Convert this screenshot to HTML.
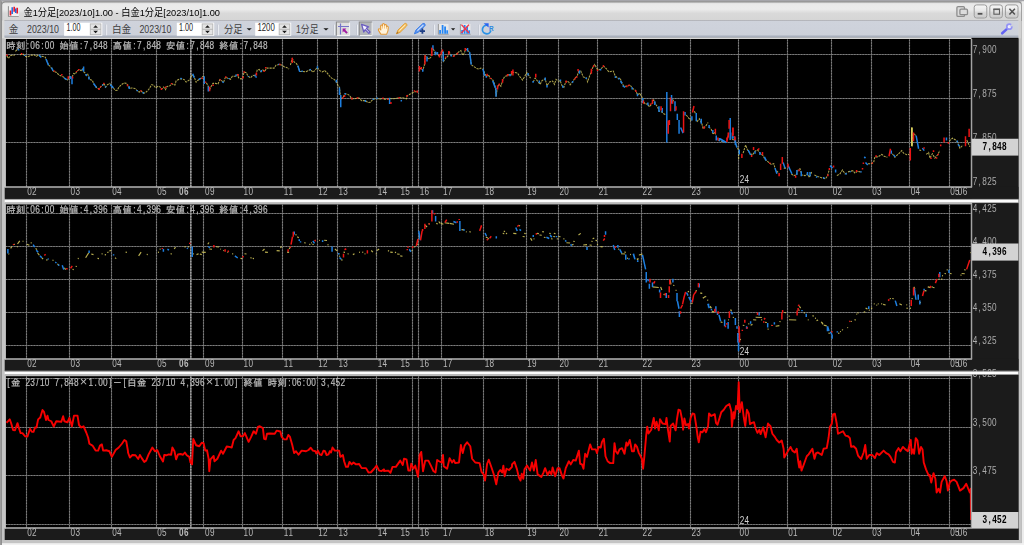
<!DOCTYPE html>
<html lang="ja">
<head>
<meta charset="utf-8">
<title>金1分足[2023/10]1.00 - 白金1分足[2023/10]1.00</title>
<style>
html,body{margin:0;padding:0;background:#c6c6c6;}
body{width:1024px;height:545px;overflow:hidden;font-family:"Liberation Sans","Noto Sans CJK JP",sans-serif;}
svg text{white-space:pre;}
</style>
</head>
<body>
<svg width="1024" height="545" viewBox="0 0 1024 545" style="display:block" font-family='"Liberation Sans", "IPAGothic", sans-serif'>
<defs><linearGradient id="gt" gradientUnits="userSpaceOnUse" x1="0" y1="2.6" x2="0" y2="20"><stop offset="0" stop-color="#e0e0e0"/><stop offset="0.12" stop-color="#eaeaea"/><stop offset="0.38" stop-color="#ebebeb"/><stop offset="0.5" stop-color="#e2e2e2"/><stop offset="0.62" stop-color="#d9d9d9"/><stop offset="1" stop-color="#d6d6d6"/></linearGradient><linearGradient id="gb" x1="0" y1="0" x2="0" y2="1"><stop offset="0" stop-color="#f6f6f6"/><stop offset="0.45" stop-color="#e8e8e8"/><stop offset="0.55" stop-color="#d8d8d8"/><stop offset="1" stop-color="#cacaca"/></linearGradient><linearGradient id="gtb" gradientUnits="userSpaceOnUse" x1="0" y1="20" x2="0" y2="37.7"><stop offset="0" stop-color="#b2b3b8"/><stop offset="0.05" stop-color="#b6b8be"/><stop offset="0.06" stop-color="#cfd3dc"/><stop offset="0.85" stop-color="#cdd1da"/><stop offset="0.9" stop-color="#aab1be"/><stop offset="1" stop-color="#a8afbd"/></linearGradient></defs>
<rect x="0" y="0" width="1024" height="545" fill="#c4c4c4"/>
<rect x="0" y="0" width="1024" height="1.3" fill="#a5a5aa"/>
<rect x="0" y="0" width="1.05" height="545" fill="#9c9c9c"/>
<rect x="1.05" y="1.3" width="0.9" height="543.7" fill="#8a8a8a"/>
<rect x="1021.7" y="1.3" width="2.3" height="543.7" fill="#ececec"/>
<rect x="1021.2" y="3" width="0.6" height="540" fill="#b2b2b2"/>
<rect x="1.95" y="543.2" width="1022.05" height="1.8" fill="#f2f2f2"/>
<path d="M1.6 21V5Q1.6 1.2 5.2 1.2H1018.4Q1021.6 1.2 1021.6 5V21Z" fill="#8d8d8d"/>
<path d="M2.2 38V5.4Q2.2 2.6 5.4 2.6H1018.2Q1021 2.6 1021 5.4V38Z" fill="url(#gt)"/>
<rect x="2.2" y="20.4" width="2.4" height="18" fill="#dadada"/>
<rect x="1018.4" y="20.4" width="2.6" height="18" fill="#d2d2d2"/>
<rect x="4.4" y="20" width="1014" height="17.7" fill="url(#gtb)"/>
<path d="M8.4 6.2V16.5H18.7" stroke="#8a8a8a" stroke-width="1" fill="none"/>
<rect x="9" y="6.2" width="9.8" height="10" fill="#f1f1f1"/>
<path d="M10.5 10.6V15.4M14.2 6.8V11.8M17.2 7.7V13.6" stroke="#f01828" stroke-width="1.7" fill="none"/>
<path d="M12.2 7.3V14M15.7 8.4V12.9" stroke="#2068e0" stroke-width="1.5" fill="none"/>
<filter id="nf0" x="0" y="0" width="1024" height="40" filterUnits="userSpaceOnUse"><feOffset dx="0" dy="0"/></filter>
<g filter="url(#nf0)"><text x="23.4" y="15.6" font-family='"Liberation Sans", "Noto Sans CJK JP", sans-serif' font-size="9.7" fill="#000" textLength="196.6" lengthAdjust="spacingAndGlyphs">金1分足[2023/10]1.00 - 白金1分足[2023/10]1.00</text></g>
<g stroke="#8c8c8c" stroke-width="1.3" fill="#dcdcdc"><rect x="956.9" y="6.6" width="7.6" height="9.8" rx="1.2"/><rect x="959.9" y="9.2" width="7.6" height="5.4" rx="1.2"/></g>
<rect x="973.8" y="4.2" width="13.4" height="14.6" rx="3" fill="#ededed" opacity="0.7"/>
<rect x="974.2" y="4.9" width="12.6" height="13.2" rx="2.4" fill="url(#gb)" stroke="#9a9a9a" stroke-width="1"/>
<rect x="989.4" y="4.2" width="13.4" height="14.6" rx="3" fill="#ededed" opacity="0.7"/>
<rect x="989.8" y="4.9" width="12.6" height="13.2" rx="2.4" fill="url(#gb)" stroke="#9a9a9a" stroke-width="1"/>
<rect x="1005" y="4.2" width="13.4" height="14.6" rx="3" fill="#ededed" opacity="0.7"/>
<rect x="1005.4" y="4.9" width="12.6" height="13.2" rx="2.4" fill="url(#gb)" stroke="#9a9a9a" stroke-width="1"/>
<rect x="977.7" y="12.9" width="4.7" height="1.8" fill="#505050"/>
<rect x="993.9" y="9.4" width="5.6" height="4.8" fill="none" stroke="#5e5e5e" stroke-width="1.1"/><rect x="993.35" y="8.5" width="6.7" height="1.6" fill="#5e5e5e"/>
<path d="M1009.4 8.7L1014.9 14.5M1014.9 8.7L1009.4 14.5" stroke="#505050" stroke-width="1.5" fill="none"/>
<path d="M1002.2 33.3L1007.6 28.4" stroke="#6262f2" stroke-width="2.5" stroke-linecap="round" fill="none"/>
<circle cx="1009.3" cy="26.7" r="2.5" fill="#eef" stroke="#9494f6" stroke-width="1.7"/>
<path d="M1009.3 26.7L1013.2 22.4L1014 26Z" fill="#cdd1da"/>
<text x="8.8" y="33.2" font-family='"Liberation Sans", "Noto Sans CJK JP", sans-serif' font-size="10" fill="#3e3e3e" textLength="9.6" lengthAdjust="spacingAndGlyphs">金</text>
<text x="27" y="32.8" font-family='"Liberation Sans", "Noto Sans CJK JP", sans-serif' font-size="10.4" fill="#3e3e3e" textLength="32" lengthAdjust="spacingAndGlyphs">2023/10</text>
<rect x="64.1" y="22.7" width="38.2" height="13.1" fill="#fff"/>
<rect x="90.3" y="23.9" width="10.6" height="10.8" fill="#e4e4e4" stroke="#b4b4b4" stroke-width="0.9"/>
<path d="M90.3 29.3H100.9" stroke="#b0b0b0" stroke-width="0.9"/>
<path d="M93.2 27.7L95.6 25.3L98 27.7ZM93.2 30.8L95.6 33.2L98 30.8Z" fill="#1c1c1c"/>
<text x="66.4" y="31.3" font-family='"Liberation Sans", "Noto Sans CJK JP", sans-serif' font-size="10.2" fill="#262626" textLength="14" lengthAdjust="spacingAndGlyphs">1.00</text>
<rect x="106.1" y="24.6" width="1" height="10.6" fill="#eef0f4"/>
<rect x="105.3" y="24.6" width="0.8" height="10.6" fill="#c2c6d1"/>
<text x="112" y="33.2" font-family='"Liberation Sans", "Noto Sans CJK JP", sans-serif' font-size="10" fill="#3e3e3e" textLength="19.2" lengthAdjust="spacingAndGlyphs">白金</text>
<text x="139.4" y="32.8" font-family='"Liberation Sans", "Noto Sans CJK JP", sans-serif' font-size="10.4" fill="#3e3e3e" textLength="32" lengthAdjust="spacingAndGlyphs">2023/10</text>
<rect x="176.8" y="22.7" width="37.4" height="13.1" fill="#fff"/>
<rect x="202.2" y="23.9" width="10.6" height="10.8" fill="#e4e4e4" stroke="#b4b4b4" stroke-width="0.9"/>
<path d="M202.2 29.3H212.8" stroke="#b0b0b0" stroke-width="0.9"/>
<path d="M205.1 27.7L207.5 25.3L209.9 27.7ZM205.1 30.8L207.5 33.2L209.9 30.8Z" fill="#1c1c1c"/>
<text x="179" y="31.3" font-family='"Liberation Sans", "Noto Sans CJK JP", sans-serif' font-size="10.2" fill="#262626" textLength="14" lengthAdjust="spacingAndGlyphs">1.00</text>
<rect x="217.9" y="24.6" width="1" height="10.6" fill="#eef0f4"/>
<rect x="217.1" y="24.6" width="0.8" height="10.6" fill="#c2c6d1"/>
<text x="224" y="33.2" font-family='"Liberation Sans", "Noto Sans CJK JP", sans-serif' font-size="10" fill="#3e3e3e" textLength="18.6" lengthAdjust="spacingAndGlyphs">分足</text>
<path d="M246.6 28.2H251.8L249.2 30.6Z" fill="#1a1a1a"/>
<rect x="255.2" y="22.7" width="36" height="13.1" fill="#fff"/>
<rect x="279.2" y="23.9" width="10.6" height="10.8" fill="#e4e4e4" stroke="#b4b4b4" stroke-width="0.9"/>
<path d="M279.2 29.3H289.8" stroke="#b0b0b0" stroke-width="0.9"/>
<path d="M282.1 27.7L284.5 25.3L286.9 27.7ZM282.1 30.8L284.5 33.2L286.9 30.8Z" fill="#1c1c1c"/>
<text x="257.4" y="31.3" font-family='"Liberation Sans", "Noto Sans CJK JP", sans-serif' font-size="10.2" fill="#262626" textLength="17.4" lengthAdjust="spacingAndGlyphs">1200</text>
<text x="296" y="33.2" font-family='"Liberation Sans", "Noto Sans CJK JP", sans-serif' font-size="10" fill="#3e3e3e" textLength="22.4" lengthAdjust="spacingAndGlyphs">1分足</text>
<path d="M323.4 28.2H328.6L326 30.6Z" fill="#1a1a1a"/>
<rect x="333.9" y="24.6" width="1" height="10.6" fill="#eef0f4"/>
<rect x="333.1" y="24.6" width="0.8" height="10.6" fill="#c2c6d1"/>
<rect x="336.4" y="22" width="13.2" height="13.5" fill="#dfdfdf"/>
<path d="M336.4 35.5V22H349.6" stroke="#8d8d8d" stroke-width="1.1" fill="none"/><path d="M349.6 22.6V35.5H337" stroke="#f4f4f4" stroke-width="1" fill="none"/>
<path d="M340.5 23.4V34.4M338 26.5H349" stroke="#7474c8" stroke-width="1.2" fill="none"/>
<path d="M342.6 28.6H346.4L345.2 29.8L347.8 32.4L346.4 33.8L343.8 31.2L342.6 32.4Z" fill="#a21ca2"/>
<rect x="357" y="24.6" width="1" height="10.6" fill="#eef0f4"/>
<rect x="356.2" y="24.6" width="0.8" height="10.6" fill="#c2c6d1"/>
<rect x="359.3" y="22" width="12.8" height="13.5" fill="#b3b6ba"/>
<path d="M359.3 35.5V22H372.1" stroke="#8d8d8d" stroke-width="1.1" fill="none"/><path d="M372.1 22.6V35.5H359.9" stroke="#eeeeee" stroke-width="1" fill="none"/>
<path d="M361.6 24.4L368.6 26.8L366.4 28.4L370 32L368.8 33.4L365.2 29.6L363.8 32Z" fill="#f4f2ff" stroke="#6a5cc0" stroke-width="1.3" stroke-linejoin="round"/>
<path d="M381 34.3Q379.6 32.6 378.6 30.6Q378 29.2 379 28.8Q380 28.6 380.8 30L380.6 26.2Q380.6 25 381.5 25Q382.3 25 382.4 26.2L382.5 24.6Q382.6 23.5 383.5 23.5Q384.4 23.5 384.5 24.6L384.6 25.4Q384.8 24.4 385.7 24.5Q386.5 24.6 386.5 25.8L386.6 26.8Q387 26 387.7 26.2Q388.3 26.4 388.3 27.6Q388.4 31.6 386.6 34.3Z" fill="#fff3dc" stroke="#e39a3a" stroke-width="1.1" stroke-linejoin="round"/>
<path d="M382.5 26.4V28.6M384.5 26V28.6M386.5 27V28.8" stroke="#efb860" stroke-width="0.7" fill="none"/>
<path d="M396.4 33.8L398 30L404.6 23.6Q406 22.8 406.8 24.2Q407.4 25.2 406.4 26.2L400 32.4Z" fill="#f6c468" stroke="#e0a03c" stroke-width="1" stroke-linejoin="round"/>
<path d="M399.4 30.6L405.2 25" stroke="#fdebc4" stroke-width="1" fill="none"/><path d="M396.3 33.9L397.4 31.6L398.6 33Z" fill="#a8702c"/>
<path d="M414.4 33.8L416 30L422.8 23.6Q424.2 22.8 425 24.2Q425.6 25.2 424.6 26.2L418 32.4Z" fill="#5b95f2" stroke="#3f7fe6" stroke-width="1" stroke-linejoin="round"/>
<path d="M417.4 30.6L423.4 25" stroke="#cfe0fc" stroke-width="1.1" fill="none"/>
<path d="M422.4 28.4V33.8M419.8 31.1H425" stroke="#1f3f86" stroke-width="1.8" fill="none"/>
<rect x="433.9" y="24.6" width="1" height="10.6" fill="#eef0f4"/>
<rect x="433.1" y="24.6" width="0.8" height="10.6" fill="#c2c6d1"/>
<rect x="438.1" y="24" width="10.4" height="10" fill="#e9e9e9"/>
<path d="M438.4 24V34.2H448.7" stroke="#9a9a9a" stroke-width="1" fill="none"/>
<path d="M440.1 33.7V30M442.6 33.7V25M445.1 33.7V26.5M447.2 33.7V30.2" stroke="#2686f4" stroke-width="1.8" fill="none"/>
<path d="M451 28.2H455.2L453.1 30.6Z" fill="#1a1a1a"/>
<rect x="460.1" y="24" width="10.4" height="10" fill="#e9e9e9"/>
<path d="M460.4 24V34.2H470.7" stroke="#9a9a9a" stroke-width="1" fill="none"/>
<path d="M462.1 33.7V30M464.6 33.7V25M467.1 33.7V26.5M469.2 33.7V30.2" stroke="#2686f4" stroke-width="1.8" fill="none"/>
<path d="M461.4 24.6L469 33M469 24.6L461.4 33" stroke="#f2364a" stroke-width="1.4" fill="none"/>
<rect x="479.1" y="24.6" width="1" height="10.6" fill="#eef0f4"/>
<rect x="478.3" y="24.6" width="0.8" height="10.6" fill="#c2c6d1"/>
<path d="M487.6 25.3A4.3 4.3 0 1 0 490.9 30.6" stroke="#2a92e6" stroke-width="1.7" fill="none"/>
<path d="M483.6 23.2H488.6V27.6Z" fill="#2a62f2"/>
<text x="489" y="30.9" font-family='"Liberation Sans", "Noto Sans CJK JP", sans-serif' font-size="8" font-weight="bold" fill="#2a86e0" textLength="4.6" lengthAdjust="spacingAndGlyphs">R</text>
<filter id="nf" x="0" y="0" width="1024" height="545" filterUnits="userSpaceOnUse"><feOffset dx="0" dy="0"/></filter>
<g id="charts" filter="url(#nf)">
<rect x="5" y="37.8" width="1013.4" height="502.2" fill="#000"/>
<defs>
<clipPath id="cp0"><rect x="5.8" y="39" width="965.5" height="147.3"/></clipPath>
<clipPath id="cp1"><rect x="5.8" y="204.2" width="965.5" height="154.1"/></clipPath>
<clipPath id="cp2"><rect x="5.8" y="376.1" width="965.5" height="151.3"/></clipPath>
</defs>
<g>
<rect x="971.5" y="38.5" width="46.9" height="160.3" fill="#1b1b1b"/>
<rect x="4.7" y="186.9" width="1013.7" height="11.9" fill="#1b1b1b"/>
<g>
<path d="M5.7 54.5H971M5.7 98.5H971M5.7 142.5H971M26.5 39.5V186.9M69.5 39.5V186.9M111.5 39.5V186.9M156.5 39.5V186.9M203.5 39.5V186.9M242.5 39.5V186.9M282.5 39.5V186.9M317.5 39.5V186.9M337.5 39.5V186.9M376.5 39.5V186.9M412.5 39.5V186.9M418.5 39.5V186.9M441.5 39.5V186.9M483.5 39.5V186.9M526.5 39.5V186.9M558.5 39.5V186.9M597.5 39.5V186.9M641.5 39.5V186.9M690.5 39.5V186.9M738.5 39.5V186.9M787.5 39.5V186.9M831.5 39.5V186.9M871.5 39.5V186.9M909.5 39.5V186.9M949.5 39.5V186.9" stroke="#525252" stroke-width="1.1" fill="none"/>
<path d="M5.7 54.5H971M5.7 98.5H971M5.7 142.5H971M26.5 39.5V186.9M69.5 39.5V186.9M111.5 39.5V186.9M156.5 39.5V186.9M203.5 39.5V186.9M242.5 39.5V186.9M282.5 39.5V186.9M317.5 39.5V186.9M337.5 39.5V186.9M376.5 39.5V186.9M412.5 39.5V186.9M418.5 39.5V186.9M441.5 39.5V186.9M483.5 39.5V186.9M526.5 39.5V186.9M558.5 39.5V186.9M597.5 39.5V186.9M641.5 39.5V186.9M690.5 39.5V186.9M738.5 39.5V186.9M787.5 39.5V186.9M831.5 39.5V186.9M871.5 39.5V186.9M909.5 39.5V186.9M949.5 39.5V186.9" stroke="#7e7e7e" stroke-width="1.1" stroke-dasharray="1.4 1.4" fill="none"/>
<path d="M190.8 39.5V186.9" stroke="#707070" stroke-width="1.4" fill="none"/>
<path d="M190.8 39.5V186.9" stroke="#a8a8a8" stroke-width="1.3" stroke-dasharray="1.6 1.2" fill="none"/>
</g>
<g fill="#bcbcbc" text-anchor="middle"><text x="10.84 20.54" y="49.1" font-size="9.3" stroke="#bcbcbc" stroke-width="0.25">時刻</text><text transform="translate(0 48.6) scale(0.82 1)" x="33.91 39.81 45.72 51.63 57.54 63.45 69.36" y="0" font-size="10.1" stroke="#bcbcbc" stroke-width="0.2">:06:00 </text><text x="64.14 73.83" y="49.1" font-size="9.3" stroke="#bcbcbc" stroke-width="0.25">始値</text><text transform="translate(0 48.6) scale(0.82 1)" x="98.9 104.81 110.72 116.62 122.53 128.44 134.35" y="0" font-size="10.1" stroke="#bcbcbc" stroke-width="0.2">:7,848 </text><text x="117.43 127.12" y="49.1" font-size="9.3" stroke="#bcbcbc" stroke-width="0.25">高値</text><text transform="translate(0 48.6) scale(0.82 1)" x="163.89 169.8 175.71 181.62 187.53 193.44 199.34" y="0" font-size="10.1" stroke="#bcbcbc" stroke-width="0.2">:7,848 </text><text x="170.73 180.42" y="49.1" font-size="9.3" stroke="#bcbcbc" stroke-width="0.25">安値</text><text transform="translate(0 48.6) scale(0.82 1)" x="228.89 234.8 240.7 246.61 252.52 258.43 264.34" y="0" font-size="10.1" stroke="#bcbcbc" stroke-width="0.2">:7,848 </text><text x="224.02 233.71" y="49.1" font-size="9.3" stroke="#bcbcbc" stroke-width="0.25">終値</text><text transform="translate(0 48.6) scale(0.82 1)" x="293.88 299.79 305.7 311.61 317.52 323.42" y="0" font-size="10.1" stroke="#bcbcbc" stroke-width="0.2">:7,848</text></g>
<g clip-path="url(#cp0)">
<path d="M911.9 127.6V146.2" stroke="#e6da62" stroke-width="1.7" fill="none"/>
<path d="M6.88 55.88L8.5 58.38L10.62 55.5L15 55M15.25 51.25L18.75 49.25M20 54.62L23.12 54L25 56.25L27.5 57.12L30.62 55.25L34.38 55L36.25 56.5L38.12 55L40 56.25L43.12 56.5L45.25 57.12L46.5 60.25L48.5 65L50.25 66.25L51.88 69L53.5 71.25L56.88 72.5L58.75 75L61.25 75.88L63.75 77.12L65 78.75L67.5 80L69.38 77.12L71.5 76.5L72.25 76.5L73.75 73.38L75.25 74L76.88 71.25L79 69.62L81 70.5L82.5 69L84 72.12L85.25 73L86.5 75.5L87.75 74.25L89.38 79.25L92.25 80.25L94 84.25L96.5 87.5L99 89L101 86.5L102.75 85L104 83.38L105.62 87.12L107.5 84.62L109.75 83.38L111.25 85.5L113.5 88L115.25 90.5L117.25 90.25L119 87.12L121.5 84.62L124 83L126.5 83.38L128 85.5M128 86.5L129.88 88.38L131.75 88L134.88 88.38L137.38 90.88L139.25 92.12L141.12 90.88L143.62 93.38L145.5 92.5L148.62 89.62L151.75 84.62L153.62 85.25L155.5 87.75L158 86.25L160.25 87.12L161.75 89L163.62 87.12L165.5 89.62L167 86.5L169.88 85.88L171.75 83.75L174.88 85L176.12 80.88L179.25 79.25L181.75 78.75L184.25 79.62L186.12 82.12L188 80.88L189.88 79.62L191.12 76.5L192.75 74.62L194.25 77.12L196.12 82.12L198 80.25L199.88 79L201.75 77.75L203.25 76.25L204.5 82.12L206.75 83.38L208.62 87.12L209.88 89L211.12 86.5L213 83.38L215.5 83.38L218 84L219.88 79.62L221.75 80.88L223.62 82.12L225.5 77.12L228 78.38L230.5 79.25L232.38 76.25L235.5 76.25L237.38 74.62L238.62 77.75L241.12 79L243 77.12L244 72.12L246.12 72.5L248 76.25L250.5 77.75L253 75.25L256 75.88M256 75L257.25 70L259.12 69.38L261 71.88L262.88 70L264.75 71.25L266.62 68.12L274.12 68.12L276 65.25L279.12 64.38L281.62 65L284.12 66.88L286.62 67.5L289.12 69M290.38 65L292.25 58.75L294.12 61.88L296.62 63.75L298.5 67.5L299.75 71.5L302.88 71.5L305.38 71.88L308.5 70.62L310.38 69.38L312.88 72.25L314.75 70.62L317.25 67.5L319.75 70.62L322.25 71.88L324.75 70.62L327.25 73.12L329.75 76.25L331.62 78.12L334.12 79.38L336 81.25L337.88 85L339.5 87.5L340.38 95L341 98.75L342.88 97.5L345 93.75L347.88 94.38L349.75 95.62L351.62 98.75L354.75 98.75L357.25 98.12L359.12 98.12L361.62 100.62L365.38 100.62L367.88 102.5L370.38 102.25L372.88 99.38L376 98.5L379.12 99L384 98.75M384 99.25L387.75 99L389.62 98.38L392.75 98.75L396.5 98.38L399 97.75L402.75 97.75L406.5 98.75L407.12 95.88L410.25 94L414 92.12L417.12 91.5M419 69L420.88 68.38L422.75 70.25L424.25 65.88L425.25 55.88L427.12 57.75L429 59L430.88 57.12L432.12 48.38L433.38 49L435.25 54L437.12 52.75L439 56.5L440.88 53.38L442.5 50.88L443.75 61.25L445.88 57.75L447.75 56.5L449 51.5L450.88 55.25L453.38 56.25L455.88 54.62L458.38 52.12L460.88 50.5L462.75 55.25L464.62 52.75L465.25 49L467.12 50L469 51.5L470.25 56.5L471.25 64.62L473.38 66.25L476.5 68.38L479 69L480.88 68L483.38 69.62L484.62 73.38L486.5 76.5L488.38 74.62L490.25 78.38L492.12 79L494 82.12L495.25 87.12L496.25 96.5L497.12 89L499 84.62L500.88 86.25L502.75 80.25L504.62 76.5L507.12 75.88L509 74.62L510.88 75.25L512 72.12M512 72.5L514.5 72.25L517.62 73.12L519.5 76.25L522.62 80L524.5 76.88L526.75 72.5L528.88 75.62L530.5 78.12M533.25 81.88L535.12 78.12L537.62 81.25L540.12 84.38L542 80.62L545.12 78.75L547 85.62L549.5 81.88L552.62 81L554.5 84.38L556 79.38L558.5 81.25L560.12 80.62L562 85.62L563.88 87.25L565.75 81.88L568.25 81.25L570.12 84.75L572.62 81.88L574.5 78.75L577 76.25L578.88 71.25L580.75 71L583.25 76.88L586.38 78.12L587.62 81.88L589.5 76.25L591.38 71.25L593.25 66.25L594.75 64.38L597.62 70L600.75 69.38L603.25 66L605.75 68.12L608.88 71.88L613.25 71L615.12 75.62L618.25 78.75L620.12 78.12L622 83.12L623.88 86.25L627 86.25L630.12 85L632.62 88.5L635.12 90L637.62 94.75L640 93.12M640 93.75L641.88 96.88L643.12 101.25L645.62 104.38L647.5 103.75L649.38 106.88L651.88 103.75L653.75 100L655.62 104.38L657.5 106.88L659.38 111.25L661.88 111.88L663.75 113.75L666.25 115M672.5 99.38L673.75 101.25M686.25 115L688.75 118.12L691.25 120.62M694.38 111.25L695.62 113.75M696.88 121.88L699.38 118.75L701.88 123.75L703.12 128.75L705.62 126.25L708.12 122.5M708.75 126.88L711.25 129.38L713.12 134.38L715 131.88L715.62 134.38M718.12 140L721.25 141.25L725 141.88M731.88 138.75L733.75 140L735.62 141.88M736.25 145L738.5 150L738.75 160M743.12 153.12L745.62 145L747.5 150L750 153.12L752.5 155L755 151.25L757.5 150L760 153.12L763.12 155.62L765 159.38L768.12 161.88L771.25 164.38L773.75 163.75L775.62 170L778.12 172.5M783.75 168.12L786.25 168.12M791.25 173.75L793.75 175.62L796.25 175L798.12 170L800 168.75L801.88 175L805 175.62L807.5 173.75L809.38 177.5L811.88 171.25M814.38 175L818.75 176.88L822.5 178.12L825.62 178.75L827.5 175.62L829.38 169.38M836.88 175.62L840 173.75L842.5 170L845 173.75L847.5 172.5M848 171.88L850.5 171.25L853 170.62L854.88 173.12L857.38 171.25L860.5 171.88M868 163.75L871.12 163.75L873.62 162.5L874.88 156.88L878 156.88L881.75 154.38L884.25 156.25L887.38 157.25M892.38 153.75L894.88 157.25L898 154.38L901.75 150.62L903.62 153.12L906.75 154.75L909 154.38M911.75 127.5L912.38 146.25M914.25 133.75L916.12 136.25M919.25 150L921.12 150.62M926.12 154.38L928.62 152.5L929.88 158.12L932.38 153.75L934.88 158.12L937.38 155L939.88 150.62M949.25 141.25L952.38 138.12L955.5 140L957.38 141.88L959.88 148.12L963 145M966.75 140L969.88 146.88" stroke="#d8cc5e" stroke-width="1.05" fill="none" stroke-linecap="butt" stroke-dasharray="2.2 0.9" opacity="0.8"/>
<path d="M18.62 49L18.62 50.5M24.69 55L24.69 55.88M39 55L41.25 57.5M46 59L48.5 65.25M51.5 67.5L53.12 70.88M64 77.75L66.88 79.75M70.31 76.25L70.31 79M72 76.5L72 84.25M82.31 70.25L82.31 69M83.62 66.5L83.62 71.75M86.25 74L86.25 76M88.94 76.5L88.94 79.62M93.5 83.38L96.5 87.5M102.25 85.5L103.12 84.62M105.5 86.25L105.5 87.5M110.25 84.62L113.5 88M129.25 86.25L129.25 89M137.25 90L137.25 91.25M143.19 92.12L143.19 93.38M180.5 78L181.75 79M192.75 73.75L194.25 77.75M198.62 79.62L200.5 78.38M204.25 76.25L204.25 84M208.31 86.5L208.31 91.5M222.38 81.5L223.62 82.75M229.06 78L229.06 79M236 74.62L236 76.5M248.38 75.88L248.38 76.75M255.19 74.62L255.19 76.5M297.88 65.62L299.75 71.88M261.31 70L261.31 71.88M310.25 69L310.25 70.62M317.44 66.25L317.44 68.75M336.31 79.75L336.31 82.5M339.44 87.5L339.44 95M340.75 95L340.75 107.25M345.25 93.12L345.25 94.38M365.38 100L365.38 101.88M373.31 98.75L373.31 100M377.06 97.5L377.06 99M278.88 63.75L278.88 65M302.06 70.62L302.06 71.88M256.12 76.25L256.12 77.75M389.62 97.75L389.62 104M401.31 100L401.31 101.5M422.75 69L422.75 71.75M427 56.5L427 61.5M432.94 45.25L432.94 49.62M435.44 51.5L435.44 55.25M443.25 51.5L443.25 61.5M451.19 54.62L451.19 56.5M467.56 48L467.56 51.5M469.62 52.12L471.25 64.62M483 69L484.62 75.88M486.31 75.88L486.31 77.75M492.75 80.88L495.25 87.75M496 87.75L496 96.75M510.06 74L510.06 76.25M437.44 52.12L437.44 54.62M528.06 73.12L528.06 75.62M533.06 81L533.06 82.75M539.31 80.62L539.31 83.12M545.25 77.5L545.25 80.62M547 85L547 87.5M560.44 79.38L560.44 81.25M562.75 85.62L562.75 87.75M572.62 81L572.62 82.75M579.5 70.62L579.5 73.75M586.25 77.5L586.25 79M600.56 68.75L600.56 70.62M615.38 76.25L615.38 78.12M618.88 77.75L618.88 79.38M620.5 81L622 83.5M622.62 85.62L625.12 87.5M632.19 87.25L632.19 89.38M637.5 93.75L637.5 96.25M666.81 91.88L666.81 142.5M642.81 98.12L642.81 103.12M647.88 102.5L647.88 105.62M654.81 101.25L654.81 105M658.94 106.25L658.94 111.88M662.19 108.12L662.19 112.5M671.56 95L671.56 103.75M675 101.25L675 111.25M677.31 113.75L677.31 120M679.06 120L679.06 133.75M680.62 127.5L683.12 133.12M685 111.88L685 115.62M691.88 116.25L691.88 120.62M696.25 113.12L696.25 121.25M701.25 118.75L701.25 123.75M709.12 125L709.12 128.12M712.81 130L712.81 133.12M716.25 135.62L716.25 140.62M719.38 138.12L719.38 141.25M721.25 139.38L723.12 141.88M724.38 141.25L726.25 142.75M730.19 118.12L730.19 140M732.31 132.5L732.31 138.75M735.38 140L735.38 145M720 138.75L726.25 142.5M733.75 136.25L736.88 147.5M739.25 149.38L739.25 154.38M748.12 150L750.62 155M755 151.25L755 153.75M760 151.88L760 155M764.38 156.88L766.25 160.62M775 168.12L776.88 173.75M783.12 162.5L785 168.12M788.12 165.62L791.88 173.75M796.88 170L796.88 175M801.25 171.25L801.25 176.25M807.5 171.88L807.5 175.62M810 171.88L810 176.25M816.62 176.25L816.62 177.75M823.75 176.88L823.75 178.75M830 165.62L832.5 168.12M835.62 169.38L835.62 172.5M846.06 173.12L846.06 174.75M864.25 156.88L865.5 158.12M865.5 162.5L867.75 165M891.25 150.62L891.25 153.75M893.62 155L895.25 156.88M916.12 135.62L918.62 148.75M922.38 148.12L924.25 150.62M946.44 137.5L946.44 140.62M957.38 140.62L957.38 142.5M958 144.38L959.5 146.25M861 171.25L861 172.5M850.31 171.25L850.31 172.25" stroke="#1d7fe0" stroke-width="1.5" fill="none" stroke-linecap="butt"/>
<path d="M7 55.88L7 54.62M21.62 54.62L21.62 53M54.38 71.75L54.38 70.5M61.81 75.5L61.81 74M68.31 78.75L68.31 76.25M72.62 78.38L72.62 76.5M76.56 72.12L76.56 70.88M78.88 70.25L78.88 69M99.06 90L99.06 88M100.38 87L101.25 86.25M103.88 84L103.88 82.75M127.5 86.25L127.5 84.62M140.88 91.5L140.88 90.25M161.44 90L161.44 88M165.62 88L165.62 86.5M171.56 84.25L171.56 83M202.12 79L202.12 77.5M205.5 82.75L205.5 81.5M209.62 91.25L209.62 86.75M213.12 85.88L213.12 84.62M220.19 80.5L220.19 79.25M225.81 77.75L225.81 76.25M238.12 75.88L238.12 74M243 78.38L243 76.5M244.12 72.75L244.12 71.25M292.25 63.12L292.25 57.75M256.44 75.62L256.44 72.5M265.69 68.5L265.69 66.88M279.88 65.25L279.88 63.75M264.12 71.88L264.12 70.62M342.88 98.75L342.88 96.88M344.56 96.88L344.56 95M351.94 99.38L351.94 97.5M357.44 98.75L357.44 97.25M383 99L383 97.5M390.88 104L390.88 102.12M407 96.75L407 95M414.5 91.75L414.5 90.25M417.25 92.75L417.25 90.5M419.38 71.5L419.38 65.88M421.31 69.62L421.31 67.12M424.94 64.62L424.94 55.25M431.88 55.88L431.88 47.75M439.5 57.5L439.5 54M441.31 54.62L441.31 51.5M442.44 51.5L442.44 49.62M448.81 54.62L448.81 50.88M453.81 57.12L453.81 55.25M457.44 54.62L457.44 52.75M465.44 50.88L465.44 48M487.12 75.88L487.12 73.75M490.5 79L490.5 77.75M497.56 89.62L497.56 85.25M499.38 85.25L499.38 83.38M502.56 82.75L502.56 79M507.56 76.25L507.56 74M511.62 73.38L511.62 70.88M399.12 98.38L399.12 97.12M387.88 100L387.88 98.38M445.62 58L445.62 56.5M512.94 75.62L512.94 69.38M535.75 77.5L535.75 73.75M566.12 82.75L566.12 80.62M575 79.38L575 77.75M576.81 77.75L576.81 76.25M578.06 71.25L578.06 69M591.38 73.75L591.38 68.75M593.62 66.88L593.62 65.25M597.5 71L597.5 69.38M603.44 66.88L603.44 65.25M626.81 87.25L626.81 85.62M629 86L629 84.38M635.88 91.88L635.88 90.25M668.25 133.75L668.25 120.62M669.38 125L669.38 120M670.5 111.25L670.5 97.5M672.62 103.75L672.62 100.62M675.94 110.62L675.94 106.25M683.56 132.5L683.56 111.25M692.5 112.5L694 106M661.06 110.62L661.06 106.25M652.5 103.75L652.5 99.38M650.62 105L650.62 103.5M643.44 103.75L643.44 100.62M704.12 128.75L704.12 126.25M715.38 133.75L715.38 128.75M717.88 140.62L717.88 137.5M726.88 141.88L726.88 137.5M728.25 137.5L728.25 132.5M729.12 128.75L729.12 120M733.12 135L733.12 127.5M734.81 140L734.81 136.25M726.88 141.25L728.75 132.5M732.81 136.25L732.81 127.5M735 140.62L735 136.88M741.88 158.12L741.88 153.75M753.56 150L753.56 146.88M751.62 156.88L751.62 155M757.5 150L759.38 148.5M762.5 155L762.5 151.88M769.81 164L769.81 162.5M780.62 170L780.62 163.75M782.31 163.75L782.31 156.88M779.12 176.25L779.12 173.12M788 167.5L788 163.75M795.62 177.75L795.62 175.62M799.12 171.25L799.12 169.38M827.88 176.25L827.88 174.38M829.38 170L829.38 168.12M833.56 167.5L833.56 165.62M856.56 171.88L856.56 170M863.38 164L863.38 162.5M862.5 169.38L862.5 168.12M872.25 163.75L872.25 162.5M876.12 156.88L876.12 155.25M889 156.25L890.5 148.75M910.31 160.62L910.31 148.12M913.5 141.25L913.5 132.5M924.06 148.75L924.06 147.25M931 159L931 157.5M933.5 151.88L933.5 150.25M936.56 158.75L936.56 157.25M938.12 155.25L938.12 153.75M940.69 146.25L940.69 144.38M944.06 142.5L944.06 137.5M965.5 146.25L965.5 136.25M969.12 136.88L969.12 128.75M948.38 143.75L948.38 141.88" stroke="#ec1414" stroke-width="1.5" fill="none" stroke-linecap="butt"/>
</g>
<g fill="#d0d0d0" text-anchor="middle"><text transform="translate(0 183.2) scale(0.78 1)" x="951.31 957.52" y="0" font-size="10.5">24</text></g>
<path d="M5.2 186.9H972.1" stroke="#b6b6b6" stroke-width="1.5" fill="none"/>
<path d="M971.5 186.9V39" stroke="#a4a4a4" stroke-width="1.5" fill="none"/>
<rect x="4.3" y="38.7" width="1.6" height="148.9" fill="#c8c8c8"/>
<g fill="#b8b8b8" text-anchor="middle"><text transform="translate(0 194.9) scale(0.78 1)" x="37.85 44.06" y="0" font-size="10.5">02</text></g><g fill="#b8b8b8" text-anchor="middle"><text transform="translate(0 194.9) scale(0.78 1)" x="93.36 99.57" y="0" font-size="10.5">03</text></g><g fill="#b8b8b8" text-anchor="middle"><text transform="translate(0 194.9) scale(0.78 1)" x="146.82 153.04" y="0" font-size="10.5">04</text></g><g fill="#b8b8b8" text-anchor="middle"><text transform="translate(0 194.9) scale(0.78 1)" x="204.39 210.6" y="0" font-size="10.5">05</text></g><g fill="#b8b8b8" text-anchor="middle" font-weight="bold"><text transform="translate(0 194.9) scale(0.78 1)" x="232.48 238.69" y="0" font-size="10.5">06</text></g><g fill="#b8b8b8" text-anchor="middle"><text transform="translate(0 194.9) scale(0.78 1)" x="265.8 272.01" y="0" font-size="10.5">09</text></g><g fill="#b8b8b8" text-anchor="middle"><text transform="translate(0 194.9) scale(0.78 1)" x="315.16 321.37" y="0" font-size="10.5">10</text></g><g fill="#b8b8b8" text-anchor="middle"><text transform="translate(0 194.9) scale(0.78 1)" x="366.57 372.78" y="0" font-size="10.5">11</text></g><g fill="#b8b8b8" text-anchor="middle"><text transform="translate(0 194.9) scale(0.78 1)" x="410.8 417.01" y="0" font-size="10.5">12</text></g><g fill="#b8b8b8" text-anchor="middle"><text transform="translate(0 194.9) scale(0.78 1)" x="436.82 443.04" y="0" font-size="10.5">13</text></g><g fill="#b8b8b8" text-anchor="middle"><text transform="translate(0 194.9) scale(0.78 1)" x="487.21 493.42" y="0" font-size="10.5">14</text></g><g fill="#b8b8b8" text-anchor="middle"><text transform="translate(0 194.9) scale(0.78 1)" x="516.32 522.54" y="0" font-size="10.5">15</text></g><g fill="#b8b8b8" text-anchor="middle"><text transform="translate(0 194.9) scale(0.78 1)" x="540.93 547.14" y="0" font-size="10.5">16</text></g><g fill="#b8b8b8" text-anchor="middle"><text transform="translate(0 194.9) scale(0.78 1)" x="570.8 577.01" y="0" font-size="10.5">17</text></g><g fill="#b8b8b8" text-anchor="middle"><text transform="translate(0 194.9) scale(0.78 1)" x="624.26 630.47" y="0" font-size="10.5">18</text></g><g fill="#b8b8b8" text-anchor="middle"><text transform="translate(0 194.9) scale(0.78 1)" x="678.88 685.09" y="0" font-size="10.5">19</text></g><g fill="#b8b8b8" text-anchor="middle"><text transform="translate(0 194.9) scale(0.78 1)" x="720.16 726.37" y="0" font-size="10.5">20</text></g><g fill="#b8b8b8" text-anchor="middle"><text transform="translate(0 194.9) scale(0.78 1)" x="770.54 776.75" y="0" font-size="10.5">21</text></g><g fill="#b8b8b8" text-anchor="middle"><text transform="translate(0 194.9) scale(0.78 1)" x="826.7 832.91" y="0" font-size="10.5">22</text></g><g fill="#b8b8b8" text-anchor="middle"><text transform="translate(0 194.9) scale(0.78 1)" x="889.39 895.6" y="0" font-size="10.5">23</text></g><g fill="#b8b8b8" text-anchor="middle"><text transform="translate(0 194.9) scale(0.78 1)" x="951.05 957.27" y="0" font-size="10.5">00</text></g><g fill="#b8b8b8" text-anchor="middle"><text transform="translate(0 194.9) scale(0.78 1)" x="1013.36 1019.57" y="0" font-size="10.5">01</text></g><g fill="#b8b8b8" text-anchor="middle"><text transform="translate(0 194.9) scale(0.78 1)" x="1070.54 1076.75" y="0" font-size="10.5">02</text></g><g fill="#b8b8b8" text-anchor="middle"><text transform="translate(0 194.9) scale(0.78 1)" x="1121.05 1127.27" y="0" font-size="10.5">03</text></g><g fill="#b8b8b8" text-anchor="middle"><text transform="translate(0 194.9) scale(0.78 1)" x="1170.41 1176.62" y="0" font-size="10.5">04</text></g><g fill="#b8b8b8" text-anchor="middle"><text transform="translate(0 194.9) scale(0.78 1)" x="1221.05 1227.27" y="0" font-size="10.5">05</text></g><g fill="#b8b8b8" text-anchor="middle"><text transform="translate(0 194.9) scale(0.78 1)" x="1230.94 1237.15" y="0" font-size="10.5">06</text></g>
<g fill="#acacac" text-anchor="middle"><text transform="translate(0 52.9) scale(0.78 1)" x="1249.9 1256.11 1262.32 1268.54 1274.75" y="0" font-size="10.5">7,900</text></g>
<g fill="#acacac" text-anchor="middle"><text transform="translate(0 96.8) scale(0.78 1)" x="1249.9 1256.11 1262.32 1268.54 1274.75" y="0" font-size="10.5">7,875</text></g>
<g fill="#acacac" text-anchor="middle"><text transform="translate(0 141.4) scale(0.78 1)" x="1249.9 1256.11 1262.32 1268.54 1274.75" y="0" font-size="10.5">7,850</text></g>
<g fill="#acacac" text-anchor="middle"><text transform="translate(0 185.4) scale(0.78 1)" x="1249.9 1256.11 1262.32 1268.54 1274.75" y="0" font-size="10.5">7,825</text></g>
<rect x="971.9" y="138.75" width="46.5" height="16.85" fill="#d3d3d3"/>
<g fill="#000" text-anchor="middle" font-weight="bold"><text transform="translate(0 150.18) scale(0.78 1)" x="1262.59 1268.8 1275.02 1281.23 1287.44" y="0" font-size="10.5">7,848</text></g>
</g>
<g>
<rect x="971.5" y="203.2" width="46.9" height="167.8" fill="#1b1b1b"/>
<rect x="4.7" y="358.9" width="1013.7" height="12.1" fill="#1b1b1b"/>
<g>
<path d="M5.7 213.5H971M5.7 246.5H971M5.7 279.5H971M5.7 312.5H971M5.7 345.5H971M26.5 204.7V358.9M69.5 204.7V358.9M111.5 204.7V358.9M156.5 204.7V358.9M203.5 204.7V358.9M242.5 204.7V358.9M282.5 204.7V358.9M317.5 204.7V358.9M337.5 204.7V358.9M376.5 204.7V358.9M412.5 204.7V358.9M418.5 204.7V358.9M441.5 204.7V358.9M483.5 204.7V358.9M526.5 204.7V358.9M558.5 204.7V358.9M597.5 204.7V358.9M641.5 204.7V358.9M690.5 204.7V358.9M738.5 204.7V358.9M787.5 204.7V358.9M831.5 204.7V358.9M871.5 204.7V358.9M909.5 204.7V358.9M949.5 204.7V358.9" stroke="#525252" stroke-width="1.1" fill="none"/>
<path d="M5.7 213.5H971M5.7 246.5H971M5.7 279.5H971M5.7 312.5H971M5.7 345.5H971M26.5 204.7V358.9M69.5 204.7V358.9M111.5 204.7V358.9M156.5 204.7V358.9M203.5 204.7V358.9M242.5 204.7V358.9M282.5 204.7V358.9M317.5 204.7V358.9M337.5 204.7V358.9M376.5 204.7V358.9M412.5 204.7V358.9M418.5 204.7V358.9M441.5 204.7V358.9M483.5 204.7V358.9M526.5 204.7V358.9M558.5 204.7V358.9M597.5 204.7V358.9M641.5 204.7V358.9M690.5 204.7V358.9M738.5 204.7V358.9M787.5 204.7V358.9M831.5 204.7V358.9M871.5 204.7V358.9M909.5 204.7V358.9M949.5 204.7V358.9" stroke="#7e7e7e" stroke-width="1.1" stroke-dasharray="1.4 1.4" fill="none"/>
<path d="M190.8 204.7V358.9" stroke="#707070" stroke-width="1.4" fill="none"/>
<path d="M190.8 204.7V358.9" stroke="#a8a8a8" stroke-width="1.3" stroke-dasharray="1.6 1.2" fill="none"/>
</g>
<g fill="#bcbcbc" text-anchor="middle"><text x="10.84 20.54" y="213.1" font-size="9.3" stroke="#bcbcbc" stroke-width="0.25">時刻</text><text transform="translate(0 212.6) scale(0.82 1)" x="33.91 39.81 45.72 51.63 57.54 63.45 69.36" y="0" font-size="10.1" stroke="#bcbcbc" stroke-width="0.2">:06:00 </text><text x="64.14 73.83" y="213.1" font-size="9.3" stroke="#bcbcbc" stroke-width="0.25">始値</text><text transform="translate(0 212.6) scale(0.82 1)" x="98.9 104.81 110.72 116.62 122.53 128.44 134.35" y="0" font-size="10.1" stroke="#bcbcbc" stroke-width="0.2">:4,396 </text><text x="117.43 127.12" y="213.1" font-size="9.3" stroke="#bcbcbc" stroke-width="0.25">高値</text><text transform="translate(0 212.6) scale(0.82 1)" x="163.89 169.8 175.71 181.62 187.53 193.44 199.34" y="0" font-size="10.1" stroke="#bcbcbc" stroke-width="0.2">:4,396 </text><text x="170.73 180.42" y="213.1" font-size="9.3" stroke="#bcbcbc" stroke-width="0.25">安値</text><text transform="translate(0 212.6) scale(0.82 1)" x="228.89 234.8 240.7 246.61 252.52 258.43 264.34" y="0" font-size="10.1" stroke="#bcbcbc" stroke-width="0.2">:4,396 </text><text x="224.02 233.71" y="213.1" font-size="9.3" stroke="#bcbcbc" stroke-width="0.25">終値</text><text transform="translate(0 212.6) scale(0.82 1)" x="293.88 299.79 305.7 311.61 317.52 323.42" y="0" font-size="10.1" stroke="#bcbcbc" stroke-width="0.2">:4,396</text></g>
<g clip-path="url(#cp1)">
<path d="M10.62 248.38L11.88 246.5M13.12 244.62L15 244.25M16.88 247.12L17.5 246.5M17.5 244L19.75 240.88M22.5 241.25L23.5 241.25M26.88 244.25L29.38 245.25M30.62 242.75L31.88 243M35.62 248.38L36.88 249.62M37.5 252.75L39.38 255.25M41.88 258L43.12 259M46.25 260.25L47.5 259.62M52.5 260L53.5 260.5M57.5 263.75L58.75 265.5M64.38 267.75L65.62 269.62M72.5 269.25L73.75 269.62M75.62 266.25L76.88 266.5M77.75 258.38L78.75 258.62M85.62 257.75L88.75 252.75M91.25 254L93.5 254.62M97.5 258.38L99 258.62M101.5 253.75L102.75 254M104.75 254.62L106 254.88M107.25 252.5L108.5 252.12M109.38 250.88L111 250.5M115 257.75L116.25 258.62M125.62 252.12L126.88 252.38M8.5 253.75L9.25 254.25M138.62 255.88L141.12 252.12M146.75 254.38L147.75 254.62M158 252.12L159 252.38M159.5 249L160.75 249.25M170.5 253.75L172 254M174.25 249L175.5 247.12M184.25 246.75L185.75 247M187.75 246.75L189 247M192.75 253.75L194 254M196.5 254.62L198.62 253.75M199.88 254L201.75 254.62M201.75 252.12L205.75 252.38M207.75 244.25L209 242.5M209.25 249L212 249.25M216.12 246.75L219 247M220.25 249L221 249.25M223.25 250.5L224.25 250.75M227.38 252.12L228.25 252.38M232 253.75L233.25 254M240.5 258.38L242 258.62M244.5 253.75L246.5 254M250.25 257.75L251.75 258M252.75 258.38L254 258.62M262.5 250.88L264.5 249M265 252.12L267.88 252.38M276.62 250.62L279.75 250.88M280.38 247.75L281.62 246.5M287 252.12L289.12 252.38M289.12 249L290.38 247.12M295.38 234.62L296.62 235M297.25 236.75L298.75 237.75M304.12 242.75L305.75 243M309.12 244.25L310.38 244.5M311 242.75L312 243M312.25 244.25L313.75 244.5M319.12 240.25L320 240.5M324.12 240.25L327 240.5M327.5 244.62L328.5 244.88M335 249L337 250.88M338.5 253.75L339.5 254M339.12 255.88L340 256.5M341.25 259.62L342.5 260.25M343.5 252.12L345 252.38M347.5 253.75L348.75 254M352.88 254.62L354.5 253.75M359.12 252.12L360 252.38M362.25 252.12L363.25 252.38M364.5 253.75L365.5 254M371.25 250.5L372.88 252.12M375.75 253.75L376.75 254M377 250.5L379.12 249M388 250.5L389 251.25M390.25 252.12L392.75 252.38M395 252.12L396 252.75M397.12 254L399.62 254.25M400.25 255.88L402.5 256.25M411.5 250.5L412.5 251M414 246.75L415.25 247M417.12 244.62L418.38 244M425.25 225.25L427.12 227.12M428.38 223.75L430 224M436.25 223.38L437.75 224M438.75 221.5L440.25 223.38M440.88 223.38L443.38 224.25M444.62 222.75L449 223.38M449.62 223.38L454 224.25M461.5 229.62L464 229.88M465.88 231.75L466.75 232M469.25 231.75L470.88 232M485.88 237.12L487.75 237.75M487.75 239L488.75 238.38M502.75 233.38L504.25 233.62M503.75 230.88L505 231.75M505.88 233.38L507.12 233.62M513.25 233.38L516.38 233.62M518.5 225.25L520.12 226M522.62 236.5L524.75 236.75M524.25 233.38L525.75 233.62M530.5 238.12L532 240.62M533.5 238.75L534.5 239M537 233.38L538.88 233.62M539.5 235L541.75 235.25M542.25 231.62L543.88 231.88M543.88 237.25L545.5 237.5M549.25 233.38L550.75 233.62M551 238.75L552.62 239M553.25 236.5L555.12 236.75M553.88 233.38L555.5 233.62M556.75 238.75L558 239M558.5 236.5L560.5 236.75M563.25 238.75L564.5 239M566.38 242.75L570.12 243M571.75 245L573.5 244.38M573.25 241.25L574.75 241.5M578.5 235L580.75 233.38M583.25 245L587 244.62M589.5 245L591.75 245.25M591.38 241.25L592.62 241.5M592.62 238.75L594.25 238.12M595.5 240.38L597 240.62M597 244.38L598 244.62M600.5 246.62L602.62 246.88M618 249L619.25 249.25M621 253.75L625.12 254M624.5 251.88L625.75 252.5M627 258.12L628 258.38M630.12 254.38L631 254.62M637 260L638.25 259.38M638.88 254.75L640 255M640 254.75L642.5 254M636.88 259.38L638.5 258.5M652.5 286.88L658.75 287.5M660.62 286.88L661.88 290M663.5 294.38L664.75 294.62M670 280L671 284.38M673.12 285.25L674.38 285.5M675.62 290L676.5 290.62M687.75 291.25L689 291.88M695.62 290.62L696.88 290.88M691.25 303.75L692.5 303.12M700.25 293.12L702.25 293.38M702.75 297.5L704 298.12M705 296.5L706.25 296.75M707.25 300L708.25 300.25M710 306.88L711.25 308.12M711.88 311.25L714 311.88M730 310.25L731.88 310.5M700.62 293.12L701.88 293.38M703.12 298.12L705.62 296.25M707.25 300.25L708.12 300.5M710 306.25L711.5 308.12M711.88 311.25L713.75 312.5M720.62 321.88L722.5 322.5M728.12 319.75L729 320M730 310L731.88 310.25M732.75 317.25L734 317.5M740 339.38L741 339.62M742.75 325.25L744.38 325.5M748.12 323.75L749.38 324M750.62 325.25L752.5 324.38M753.12 319.75L756.25 320M755.62 317.25L761.88 317.5M761 319.75L762.25 320M765 322.25L766.88 322.5M767.5 329L768.75 329.25M771.25 325.25L772.5 325.5M775.62 326.25L779.38 325.62M779.38 321.5L780.62 321.75M784.38 312.5L786 312.75M788.5 316L789.75 316.25M789 319.75L796.25 320M799.38 306.25L800.62 308.12M798.12 310L799.75 310.25M803.75 312.75L805 313M807.75 319.75L808.75 320M812.5 315.62L813.75 316.25M815 318.12L816 318.38M816.5 320.62L818.12 320M821.25 321.88L823.12 323.75M823.75 325.25L826.25 325.5M821.25 321.88L823.12 324.38M823.75 325.25L826.88 326M828.5 333.12L829.75 333.38M838.12 333.12L839.38 333.38M840 331.5L841 331.75M841.88 329.75L843.12 330M847.25 327.5L848.12 327.75M850.62 321.25L851.88 321.5M854.38 319.75L856 320M856.25 314L857.25 314.25M857.5 312.75L858.75 313M863.75 311.88L865.25 312.12M865.62 308.12L867.5 309M868.75 310L870 310.25M871 308.12L872.25 308.38M873.75 303.75L874.75 304M876.25 305L877.25 305.25M877.75 303.75L878.75 304M881 303.75L882.25 304M883.12 304.38L885.62 305M889.75 298.5L891 298.75M892.25 298.5L893.75 298.75M899.38 303.75L901.88 305M906.25 304.75L907.25 305M906.5 308.12L907.75 308.38M910 308.12L911 308.38M911.5 298.5L912.75 298.75M913.75 286.88L915 288.75M920 302.5L921 302.75M924.75 290.62L926.5 290.88M927.75 286.88L930.62 287.75M933.12 287.5L934.38 287.75M927.88 286.88L930.38 287.5M931.62 286.88L932.88 287.12M933.25 287.5L934.5 287.75M938.5 279L939.75 279.25M941 279L942.5 279.25M942 275.62L943 275.88M944.5 273.5L946 273.75M946.62 269.75L947.88 270M950 273.5L951.62 273.75M960.38 275L961.62 275.25M961.62 273.5L964.75 273.75M964.12 269.75L965.75 270M970.38 252.5L971.25 252.75M924.5 290.62L926 290.88" stroke="#d8cc5e" stroke-width="1.2" fill="none" stroke-linecap="butt" opacity="0.85"/>
<path d="M7.88 249L7.88 253.38M33.12 244.62L34.75 247.12M36.25 250.25L38.12 252.12M40 255.88L41.88 257.75M48.25 258.38L48.25 259.62M55.25 262.12L56.5 263M58.12 264.62L59.38 265.5M62.25 265.25L63.75 269.62M89.12 250.5L89.12 253M113.56 254.25L113.56 255.5M163.38 249L163.38 251.75M167.38 249.25L169 250M192.25 246.5L192.25 257.12M208.25 246.5L209.88 247.75M234.88 255.88L237.75 258M187 248L187.75 248.75M294.25 231.5L294.25 234.62M299.25 239.25L299.25 240.88M300.5 241.25L300.5 242.5M312.88 240.88L314.5 243.38M322.62 240.25L322.62 242.12M332.06 246.5L332.06 251.75M338.69 253L338.69 254.62M339.5 257.5L341.25 259.25M409.25 249.25L410.88 251.75M418.75 230.88L420.25 240.25M432.56 210.25L432.56 213.38M435.62 215.88L435.62 221.5M453.38 221.5L456.5 222.75M459.88 220.88L459.88 230.88M463.38 229.25L464.62 230.5M485 233L486.5 236.25M496.31 236.25L496.31 238.38M515.75 227.5L517.25 231M519.5 229.38L521 230.62M533.25 235L533.25 236.88M546.38 237.25L549.25 238.5M550.12 235L551.75 237.25M556.5 236L556.5 237.25M565.12 240.38L566.38 241.5M570.5 244.38L571.75 245.62M587 246.88L587 250M605.56 231.25L605.56 234.75M613.25 245L614.75 250M617.88 245L617.88 247.75M619.75 249.38L621.75 253.12M625.75 254.38L625.75 259.75M628.5 258.5L629.5 259.38M633.25 253.75L634.75 258.75M637.75 260.25L637.75 261.88M633.5 253.75L635 259.38M637.69 260.62L637.69 261.88M642.5 255L644 261.88M644 261.88L645.62 269.38M646.25 271.88L646.25 282.5M649.38 283.75L649.38 288.75M652.5 282.5L652.5 286.88M659.62 289.38L659.62 292.5M666.25 293.12L666.25 298.12M672.88 278.75L672.88 282.5M677 293.12L677 301.25M677.5 301.25L679 308.75M679.38 311.25L679.38 316.88M686.5 292.5L688.12 295.62M688.75 296.88L690.62 300.62M691.06 300L691.06 302.5M699.25 283.5L699.25 287.5M707.75 303.75L709.38 308.12M715.88 306.25L715.88 310M648.12 279.38L648.12 281.25M708.56 303.75L708.56 307.5M711.44 308.75L711.44 310.62M715.88 306.25L715.88 311.88M717.5 313.12L717.5 315M719 315L720.62 321.25M724.62 319.38L724.62 326.25M728.12 321.88L728.12 328.75M731 311.5L732.5 314.38M735.38 318.12L735.38 325M737 326.25L737 328.75M737.88 333.12L737.88 342.5M738.56 342.5L738.56 351.25M746.62 326.25L746.62 328.75M750.62 321.25L750.62 323.75M759.12 312.5L759.12 315.62M767.69 323.12L767.69 327.5M774.38 322.25L774.38 324.38M806.25 313.75L806.25 316.88M802 310L802 311.25M827.44 326.25L827.44 331.25M827.5 326.25L829 331M830.25 331.88L831.88 334.38M832.12 334.38L832.12 338.75M837.31 331.25L837.31 332.5M868.75 306.25L868.75 309M895.25 300.62L896.88 306M914.38 288.75L916 299.75M918.25 294.38L918.25 299.75M919.81 300.62L919.81 304.38M924.12 288.75L924.12 290.62M939.75 271.88L939.75 277.25M949 269.75L949 273.12" stroke="#1d7fe0" stroke-width="1.5" fill="none" stroke-linecap="butt"/>
<path d="M13.56 245L13.56 244M44.38 255.5L45.62 254.25M70.62 268.38L72.25 265.88M66.88 269.62L66.88 268M189.75 244L189.75 242.75M213.88 247.5L213.88 245M225.12 251.75L225.12 249.25M228.31 252.12L228.31 250.5M243 257.5L243 255.88M162.38 249L162.38 248M288.12 251.75L288.12 249.25M290.38 247.75L290.38 246.5M291 244.62L292.5 236.75M293.31 236.75L293.31 231.75M314.5 241L315.75 240.25M343.5 257.5L343.5 253.75M344.5 249.75L346.25 248.75M367.38 253.38L367.38 250.25M407.25 250.25L407.25 249M408 247.75L408 246.5M412.12 247.75L413.38 246.5M416.25 245.88L418 239M420.5 240.25L422.12 230.88M422.56 230.88L422.56 229M424.88 229L424.88 223.75M431.88 221.5L431.88 210.25M434.5 214.62L434.5 213M429.12 224.62L429.12 223.38M445 222.5L446.75 219.62M459.19 220L459.19 219M457.25 222.75L457.25 221.25M479.62 230.88L481.25 226.5M481.31 226.75L481.31 225.25M486.75 240.25L488 239M489.62 238.38L491.25 236.25M517.25 226.5L518.88 225.25M536.38 234.75L536.38 233.12M604.5 236.88L604.5 235M603.25 240.62L604.75 238.5M614.75 247.75L616 246.5M650 282.5L650 278.75M653.5 283.5L655 281.25M660.5 298.12L660.5 292.5M665.38 295.62L665.38 293.12M668.56 298.12L668.56 295M669.25 292.5L669.25 286.25M669.81 284.38L669.81 279.38M680.62 308.5L682.5 305M682.5 304.38L684 297.5M684 297.5L685.62 291.88M680.5 313.75L680.5 311.25M692.25 302.5L693.75 294.38M694 294.38L696.25 291.25M698.44 287.25L698.44 283.12M715 311.88L715 308.75M718.12 313.75L718.12 311.25M714.81 311.88L714.81 309.38M718.56 313.5L718.56 311.88M725.5 327.25L725.5 325.62M726.88 324.75L726.88 323.12M729.38 318.12L729.38 311.25M739.12 333.12L739.12 326.25M739.5 342.5L739.5 333.12M742.31 331L742.31 329.75M744.81 322.75L744.81 319.75M757.5 315L757.5 312.5M764 319.38L765.25 318.12M763.75 322.75L763.75 321.25M772.31 326L772.31 325M781.88 319.38L781.88 313.12M782.62 313.12L782.62 310M797.12 315.62L797.12 310.62M798.12 310.62L798.12 308.12M798.12 306L799.38 304.75M747.19 328.75L747.19 326.88M832 332.5L832 331.25M849.38 321.75L850.25 321M888.12 300.62L889.38 299.38M911.25 306L911.25 299.75M913.56 295.62L913.56 287.5M922.5 296L924 290.62M930 287L931 286M935.38 283.12L937 279M966.62 269.38L969.75 260M938.88 277.25L938.88 273.75M930 287.5L931.25 286.25" stroke="#ec1414" stroke-width="1.5" fill="none" stroke-linecap="butt"/>
</g>
<g fill="#d0d0d0" text-anchor="middle"><text transform="translate(0 355.2) scale(0.78 1)" x="951.31 957.52" y="0" font-size="10.5">24</text></g>
<path d="M5.2 358.9H972.1" stroke="#b6b6b6" stroke-width="1.5" fill="none"/>
<path d="M971.5 358.9V204.2" stroke="#a4a4a4" stroke-width="1.5" fill="none"/>
<rect x="4.3" y="203.9" width="1.6" height="155.7" fill="#c8c8c8"/>
<g fill="#b8b8b8" text-anchor="middle"><text transform="translate(0 366.9) scale(0.78 1)" x="37.85 44.06" y="0" font-size="10.5">02</text></g><g fill="#b8b8b8" text-anchor="middle"><text transform="translate(0 366.9) scale(0.78 1)" x="93.36 99.57" y="0" font-size="10.5">03</text></g><g fill="#b8b8b8" text-anchor="middle"><text transform="translate(0 366.9) scale(0.78 1)" x="146.82 153.04" y="0" font-size="10.5">04</text></g><g fill="#b8b8b8" text-anchor="middle"><text transform="translate(0 366.9) scale(0.78 1)" x="204.39 210.6" y="0" font-size="10.5">05</text></g><g fill="#b8b8b8" text-anchor="middle" font-weight="bold"><text transform="translate(0 366.9) scale(0.78 1)" x="232.48 238.69" y="0" font-size="10.5">06</text></g><g fill="#b8b8b8" text-anchor="middle"><text transform="translate(0 366.9) scale(0.78 1)" x="265.8 272.01" y="0" font-size="10.5">09</text></g><g fill="#b8b8b8" text-anchor="middle"><text transform="translate(0 366.9) scale(0.78 1)" x="315.16 321.37" y="0" font-size="10.5">10</text></g><g fill="#b8b8b8" text-anchor="middle"><text transform="translate(0 366.9) scale(0.78 1)" x="366.57 372.78" y="0" font-size="10.5">11</text></g><g fill="#b8b8b8" text-anchor="middle"><text transform="translate(0 366.9) scale(0.78 1)" x="410.8 417.01" y="0" font-size="10.5">12</text></g><g fill="#b8b8b8" text-anchor="middle"><text transform="translate(0 366.9) scale(0.78 1)" x="436.82 443.04" y="0" font-size="10.5">13</text></g><g fill="#b8b8b8" text-anchor="middle"><text transform="translate(0 366.9) scale(0.78 1)" x="487.21 493.42" y="0" font-size="10.5">14</text></g><g fill="#b8b8b8" text-anchor="middle"><text transform="translate(0 366.9) scale(0.78 1)" x="516.32 522.54" y="0" font-size="10.5">15</text></g><g fill="#b8b8b8" text-anchor="middle"><text transform="translate(0 366.9) scale(0.78 1)" x="540.93 547.14" y="0" font-size="10.5">16</text></g><g fill="#b8b8b8" text-anchor="middle"><text transform="translate(0 366.9) scale(0.78 1)" x="570.8 577.01" y="0" font-size="10.5">17</text></g><g fill="#b8b8b8" text-anchor="middle"><text transform="translate(0 366.9) scale(0.78 1)" x="624.26 630.47" y="0" font-size="10.5">18</text></g><g fill="#b8b8b8" text-anchor="middle"><text transform="translate(0 366.9) scale(0.78 1)" x="678.88 685.09" y="0" font-size="10.5">19</text></g><g fill="#b8b8b8" text-anchor="middle"><text transform="translate(0 366.9) scale(0.78 1)" x="720.16 726.37" y="0" font-size="10.5">20</text></g><g fill="#b8b8b8" text-anchor="middle"><text transform="translate(0 366.9) scale(0.78 1)" x="770.54 776.75" y="0" font-size="10.5">21</text></g><g fill="#b8b8b8" text-anchor="middle"><text transform="translate(0 366.9) scale(0.78 1)" x="826.7 832.91" y="0" font-size="10.5">22</text></g><g fill="#b8b8b8" text-anchor="middle"><text transform="translate(0 366.9) scale(0.78 1)" x="889.39 895.6" y="0" font-size="10.5">23</text></g><g fill="#b8b8b8" text-anchor="middle"><text transform="translate(0 366.9) scale(0.78 1)" x="951.05 957.27" y="0" font-size="10.5">00</text></g><g fill="#b8b8b8" text-anchor="middle"><text transform="translate(0 366.9) scale(0.78 1)" x="1013.36 1019.57" y="0" font-size="10.5">01</text></g><g fill="#b8b8b8" text-anchor="middle"><text transform="translate(0 366.9) scale(0.78 1)" x="1070.54 1076.75" y="0" font-size="10.5">02</text></g><g fill="#b8b8b8" text-anchor="middle"><text transform="translate(0 366.9) scale(0.78 1)" x="1121.05 1127.27" y="0" font-size="10.5">03</text></g><g fill="#b8b8b8" text-anchor="middle"><text transform="translate(0 366.9) scale(0.78 1)" x="1170.41 1176.62" y="0" font-size="10.5">04</text></g><g fill="#b8b8b8" text-anchor="middle"><text transform="translate(0 366.9) scale(0.78 1)" x="1221.05 1227.27" y="0" font-size="10.5">05</text></g><g fill="#b8b8b8" text-anchor="middle"><text transform="translate(0 366.9) scale(0.78 1)" x="1230.94 1237.15" y="0" font-size="10.5">06</text></g>
<g fill="#acacac" text-anchor="middle"><text transform="translate(0 211.5) scale(0.78 1)" x="1249.9 1256.11 1262.32 1268.54 1274.75" y="0" font-size="10.5">4,425</text></g>
<g fill="#acacac" text-anchor="middle"><text transform="translate(0 245.1) scale(0.78 1)" x="1249.9 1256.11 1262.32 1268.54 1274.75" y="0" font-size="10.5">4,400</text></g>
<g fill="#acacac" text-anchor="middle"><text transform="translate(0 278.4) scale(0.78 1)" x="1249.9 1256.11 1262.32 1268.54 1274.75" y="0" font-size="10.5">4,375</text></g>
<g fill="#acacac" text-anchor="middle"><text transform="translate(0 311.3) scale(0.78 1)" x="1249.9 1256.11 1262.32 1268.54 1274.75" y="0" font-size="10.5">4,350</text></g>
<g fill="#acacac" text-anchor="middle"><text transform="translate(0 344) scale(0.78 1)" x="1249.9 1256.11 1262.32 1268.54 1274.75" y="0" font-size="10.5">4,325</text></g>
<rect x="971.9" y="243.5" width="46.5" height="17.1" fill="#d3d3d3"/>
<g fill="#000" text-anchor="middle" font-weight="bold"><text transform="translate(0 255.05) scale(0.78 1)" x="1262.59 1268.8 1275.02 1281.23 1287.44" y="0" font-size="10.5">4,396</text></g>
</g>
<g>
<rect x="971.5" y="375" width="46.9" height="165" fill="#1b1b1b"/>
<rect x="4.7" y="528" width="1013.7" height="12" fill="#1b1b1b"/>
<g>
<path d="M5.7 378.5H971M5.7 427.5H971M5.7 475.5H971M5.7 524.5H971M26.5 376.6V528M69.5 376.6V528M111.5 376.6V528M156.5 376.6V528M203.5 376.6V528M242.5 376.6V528M282.5 376.6V528M317.5 376.6V528M337.5 376.6V528M376.5 376.6V528M412.5 376.6V528M418.5 376.6V528M441.5 376.6V528M483.5 376.6V528M526.5 376.6V528M558.5 376.6V528M597.5 376.6V528M641.5 376.6V528M690.5 376.6V528M738.5 376.6V528M787.5 376.6V528M831.5 376.6V528M871.5 376.6V528M909.5 376.6V528M949.5 376.6V528" stroke="#525252" stroke-width="1.1" fill="none"/>
<path d="M5.7 378.5H971M5.7 427.5H971M5.7 475.5H971M5.7 524.5H971M26.5 376.6V528M69.5 376.6V528M111.5 376.6V528M156.5 376.6V528M203.5 376.6V528M242.5 376.6V528M282.5 376.6V528M317.5 376.6V528M337.5 376.6V528M376.5 376.6V528M412.5 376.6V528M418.5 376.6V528M441.5 376.6V528M483.5 376.6V528M526.5 376.6V528M558.5 376.6V528M597.5 376.6V528M641.5 376.6V528M690.5 376.6V528M738.5 376.6V528M787.5 376.6V528M831.5 376.6V528M871.5 376.6V528M909.5 376.6V528M949.5 376.6V528" stroke="#7e7e7e" stroke-width="1.1" stroke-dasharray="1.4 1.4" fill="none"/>
<path d="M190.8 376.6V528" stroke="#707070" stroke-width="1.4" fill="none"/>
<path d="M190.8 376.6V528" stroke="#a8a8a8" stroke-width="1.3" stroke-dasharray="1.6 1.2" fill="none"/>
</g>
<g fill="#bcbcbc" text-anchor="middle"><text transform="translate(0 385.5) scale(0.82 1)" x="10.27" y="0" font-size="10.1" stroke="#bcbcbc" stroke-width="0.2">[</text><text x="15.69" y="386" font-size="9.3" stroke="#bcbcbc" stroke-width="0.25">金</text><text transform="translate(0 385.5) scale(0.82 1)" x="28 33.91 39.81 45.72 51.63 57.54 63.45 69.36 75.27 81.17 87.08 92.99" y="0" font-size="10.1" stroke="#bcbcbc" stroke-width="0.2"> 23/10 7,848</text><text x="83.52" y="386.1" font-size="13">×</text><text transform="translate(0 385.5) scale(0.82 1)" x="110.72 116.62 122.53 128.44 134.35" y="0" font-size="10.1" stroke="#bcbcbc" stroke-width="0.2">1.00]</text><text x="117.43" y="386" font-size="9.3" stroke="#bcbcbc" stroke-width="0.25">－</text><text transform="translate(0 385.5) scale(0.82 1)" x="152.08" y="0" font-size="10.1" stroke="#bcbcbc" stroke-width="0.2">[</text><text x="131.97 141.66" y="386" font-size="9.3" stroke="#bcbcbc" stroke-width="0.25">白金</text><text transform="translate(0 385.5) scale(0.82 1)" x="181.62 187.53 193.44 199.34 205.25 211.16 217.07 222.98 228.89 234.8 240.7 246.61" y="0" font-size="10.1" stroke="#bcbcbc" stroke-width="0.2"> 23/10 4,396</text><text x="209.49" y="386.1" font-size="13">×</text><text transform="translate(0 385.5) scale(0.82 1)" x="264.34 270.25 276.16 282.06 287.97 293.88" y="0" font-size="10.1" stroke="#bcbcbc" stroke-width="0.2">1.00] </text><text x="248.25 257.94" y="386" font-size="9.3" stroke="#bcbcbc" stroke-width="0.25">終値</text><text transform="translate(0 385.5) scale(0.82 1)" x="323.42" y="0" font-size="10.1" stroke="#bcbcbc" stroke-width="0.2"> </text><text x="272.48 282.17" y="386" font-size="9.3" stroke="#bcbcbc" stroke-width="0.25">時刻</text><text transform="translate(0 385.5) scale(0.82 1)" x="352.97 358.88 364.78 370.69 376.6 382.51 388.42 394.33 400.23 406.14 412.05 417.96" y="0" font-size="10.1" stroke="#bcbcbc" stroke-width="0.2">:06:00 3,452</text></g>
<g clip-path="url(#cp2)">
<path d="M6.5 422.75L9.75 419.38L11 422.75L13.12 430L15 430.25L17.5 423.12L18.75 427.5L20.62 433.12L22.5 433.12L25 436.25L27.5 436.5L30 428.75L31.88 431.88L33.5 431.88L35 427.5L36.5 427.5L38.12 419.38L40.25 417.5L42.5 410L44 411.88L46 420L47.5 415.62L48.5 420L51.25 421.25L53.75 426.5L56.25 421.25L58.75 421.5L61.25 421.88L63.12 416.25L64.38 421.25L67.5 422.25L69.5 417.75L71.88 426.25L74 415.62L77.5 415.62L79 425L81.25 427.5L83.5 426.25L86.25 432.5L88.12 437.5L89.38 443.75L92.5 445.62L95.62 450.62L98.12 450.62L100 445.62L101.88 444.38L103.12 450.62L106.25 450.25L109.38 451.25L111.88 456.88L115.62 450L118.75 447.5L121.88 443.75L124.38 440L126.25 441.25L128 451.25L128 452.5L129.88 457.5L132.38 455L135.5 455.25L138.25 459L139.88 455L141.75 458.12L144.25 461.88L146.12 460.62L148.62 454.38L152.38 447.5L154.88 451.25L157.38 450.25L159.88 456.25L163 461.5L164.25 455L166.75 455.25L168.62 454.38L171.12 454.75L172.38 447.5L174.5 451.25L176.12 459.38L178 454.38L180.5 454L183 454.75L184.88 452.5L186.75 455.25L189.25 456.88L190.5 462.5L192 464.38L193.25 439L196.12 445.25L199.25 446.25L201.75 442.75L203.62 443.12L205.25 450.62L207 450.25L208.62 458.75L209.25 471.25L210.5 459.38L213.62 456L214.5 461.25L217.38 458.75L221.12 450.62L223 453.75L226.75 446.5L229.25 446.88L231.75 447.5L233.62 440L235.5 438.12L238.62 431.25L240.5 436.25L243 436.25L244.88 433.12L248.62 441.88L251.12 436.88L253.62 431.25L256 433.75L256 433.75L257.88 426.88L259.75 426.25L262.88 428.12L264.12 438.75L265.75 439.38L267 433.75L269.75 433.5L274.75 433.75L276.62 430.62L280.38 431.5L281.62 436.88L284.12 439.38L286.62 439.38L288.25 435L290 436.88L292.25 445L294.12 453.12L296 451.25L298.5 454.75L301.62 450.62L306 451.25L308.5 450L310.75 447.75L312.88 450.62L315.38 451.25L316.25 453.5L317.88 450.62L319.75 454.38L321.62 455L323.5 450.62L325 451.25L326.62 455L328.5 454.38L329.75 451.25L331 452.5L332.5 447.5L334.75 450.62L339.12 450.62L340.38 456.88L342.88 455L344.12 461.25L346 466.88L347.88 466.88L349.5 461.88L351.62 464.38L353.5 462.5L356 464.38L359.12 464L361.62 468.12L366 468.12L368.5 472.5L371 472.25L374.12 468.75L376.62 465.62L379.12 470.62L381.62 471L384 469.38L384 471L388.38 470.62L390.5 472.75L392.5 466.88L395.88 466.88L400.25 460.62L402.75 465L404 458.75L406.5 459.38L408.38 470.62L410.25 470.62L411.25 463.75L413.38 468.75L415.25 465.62L418 476.88L419.62 455L421.25 451.88L423 471.25L425.25 460.62L428.38 460.62L430.88 465.62L433.38 471L435.5 472.5L437.12 460L439 461.25L441.75 462.5L443 455L443.75 466.25L447.12 468.75L449.62 458.12L452.12 462.5L453.75 460L455.25 463.12L459 462.5L460.88 445L462.75 453.12L464.62 445.62L467.12 442.25L470.25 446.25L472.12 458.75L475.25 462.5L479.62 463.12L481.5 471.88L484 475L485 480.62L487.12 463.75L488.75 459.75L491.5 467.5L494 475L496.25 484.38L498.38 472.5L500.25 470L502.12 472.5L503.38 465.62L504.62 476.25L506.5 468.75L509 470L512 466.88L512 464.38L514.5 461.88L517 469.38L518.88 477.5L520.5 480.62L521.75 473.75L523.25 478.75L524.5 469.38L527 465.62L530.12 470.62L532 462.5L533.88 470.62L535.75 460L537.62 474.38L541.38 476.88L543.25 473.12L545.12 468.12L547.62 475L549.5 471.25L551.38 474.38L552.62 467.5L555.12 476.25L557.62 468.12L559.5 468.12L562 475.62L563.5 478.5L565.75 468.12L568.88 461.25L570.75 464.38L573.25 460L575.75 460.62L578.88 450.62L580.12 463.75L582 464.38L583.5 468.75L585.12 453.75L587 456.88L590.12 444.38L592 449.38L595.75 449.38L597 453.12L598.5 446.88L600.75 447.5L602 441.88L603.88 438.75L605.5 456.25L607.62 461.25L610.12 463.12L613.25 463.12L614.5 443.12L615.75 451.25L617.62 453.75L619.5 449.38L622 448.12L624.5 453.75L626.38 442.5L627.62 445.62L629.75 440L632 451.25L633.88 451.25L635.12 444.38L637 446.88L638.88 453.12L640 455L641.9 458.75L643.1 468.75L644.4 456L646.25 434.75L647.25 426.62L648.5 433.5L651.25 429.75L652.5 423.5L653.75 417.88L655 428.5L656.5 421.62L658.75 430.38L660 419.12L662.5 423.5L665.62 424.12L666.5 417.88L667.75 428.5L669.75 441.62L670.62 426L673.12 423.5L675.62 430.38L676.88 419.75L678.5 409.75L680.25 410.38L681.88 418.5L683.12 429.75L684.38 418.5L686 425.38L688.12 424.12L689 428.5L690.62 417.88L692.5 413.5L694.38 414.12L696.25 426L697.75 437.25L698.75 442.25L700.62 431.62L702.5 432.25L704.38 429.12L706 432.25L708.12 426L709 413.5L711.25 416L714.75 414.12L716 422.88L717.5 424.75L719 419.75L721.25 412.25L723.75 409.75L726.25 406L729.38 404.12L731.25 411L731.88 426.62L733.5 412.25L734.38 418.5L736 406L737.5 409.12L738.75 382.25L739.75 412.25L741.88 402.25L743.75 417.25L745.25 426L746.88 409.75L748.75 413.5L750 424.12L751.88 422.88L754 422.25L755.62 428.5L757.5 432.88L759.38 429.75L760.62 434.12L763.12 427.25L765.62 437.25L768 423.5L768 423.75L770.5 426.25L772.38 433.75L774.88 436.88L776.75 440L779.25 442.5L781.75 440.62L783.62 448.75L784.25 457.5L786.75 453.12L790.5 446.88L792.38 450.62L794.88 452.5L796.75 448.75L798 460L799.25 467.5L800.25 461.25L801.5 470.62L803.62 465L806.75 456.25L808.62 454.38L812.38 448.75L814.5 458.75L816.12 453.12L818 452.5L821.75 455L823.62 448.75L826.75 448.12L828.62 437.5L829.88 426.88L831.75 423.75L833 414.38L834.88 413.75L836.75 423.75L838 433.75L840.5 432.5L843 431.25L845.5 435.62L848 436.25L849.88 438.12L851.12 446.88L853.62 446.25L856.12 448.75L858 455.62L861.12 459L863.62 452.5L865.25 445L866.75 458.75L869.25 455L872.38 455L874.88 458.12L876.75 453.12L879.25 455L883.62 450.62L886.12 453.12L888.62 454.38L890.5 456.88L893 461.88L894.88 462.5L896 452.5L896.62 451.25L898.5 448.12L900.38 451.25L902.88 446.88L905.38 449.38L907.88 451.25L909.12 446.25L910.75 440L911.62 453.75L912.88 449.38L914.12 453.75L915.75 438.12L917.5 440.62L919.12 453.75L921 446.88L922.5 449.38L923.75 462.5L926 469.38L928.75 475.62L929.75 475L931.25 482.5L933.5 473.12L935.38 478.75L936.62 492.5L938.5 488.75L940 492.5L941.62 481.88L944.75 476L946.62 481.25L947.88 490.62L949.75 482.5L951.62 480.62L954.12 479.75L956.62 481.88L960 490.62L963.5 488.12L966.25 483.75L968.25 488.75L969.75 492.5L970.75 488.75L971 520" stroke="#f60000" stroke-width="1.9" fill="none" stroke-linejoin="round"/>
</g>
<g fill="#d0d0d0" text-anchor="middle"><text transform="translate(0 523.6) scale(0.78 1)" x="951.31 957.52" y="0" font-size="10.5">24</text></g>
<path d="M5.2 528H972.1" stroke="#b6b6b6" stroke-width="1.5" fill="none"/>
<path d="M971.5 528V376.1" stroke="#a4a4a4" stroke-width="1.5" fill="none"/>
<rect x="4.3" y="375.8" width="1.6" height="152.9" fill="#c8c8c8"/>
<g fill="#b8b8b8" text-anchor="middle"><text transform="translate(0 536) scale(0.78 1)" x="37.85 44.06" y="0" font-size="10.5">02</text></g><g fill="#b8b8b8" text-anchor="middle"><text transform="translate(0 536) scale(0.78 1)" x="93.36 99.57" y="0" font-size="10.5">03</text></g><g fill="#b8b8b8" text-anchor="middle"><text transform="translate(0 536) scale(0.78 1)" x="146.82 153.04" y="0" font-size="10.5">04</text></g><g fill="#b8b8b8" text-anchor="middle"><text transform="translate(0 536) scale(0.78 1)" x="204.39 210.6" y="0" font-size="10.5">05</text></g><g fill="#b8b8b8" text-anchor="middle" font-weight="bold"><text transform="translate(0 536) scale(0.78 1)" x="232.48 238.69" y="0" font-size="10.5">06</text></g><g fill="#b8b8b8" text-anchor="middle"><text transform="translate(0 536) scale(0.78 1)" x="265.8 272.01" y="0" font-size="10.5">09</text></g><g fill="#b8b8b8" text-anchor="middle"><text transform="translate(0 536) scale(0.78 1)" x="315.16 321.37" y="0" font-size="10.5">10</text></g><g fill="#b8b8b8" text-anchor="middle"><text transform="translate(0 536) scale(0.78 1)" x="366.57 372.78" y="0" font-size="10.5">11</text></g><g fill="#b8b8b8" text-anchor="middle"><text transform="translate(0 536) scale(0.78 1)" x="410.8 417.01" y="0" font-size="10.5">12</text></g><g fill="#b8b8b8" text-anchor="middle"><text transform="translate(0 536) scale(0.78 1)" x="436.82 443.04" y="0" font-size="10.5">13</text></g><g fill="#b8b8b8" text-anchor="middle"><text transform="translate(0 536) scale(0.78 1)" x="487.21 493.42" y="0" font-size="10.5">14</text></g><g fill="#b8b8b8" text-anchor="middle"><text transform="translate(0 536) scale(0.78 1)" x="516.32 522.54" y="0" font-size="10.5">15</text></g><g fill="#b8b8b8" text-anchor="middle"><text transform="translate(0 536) scale(0.78 1)" x="540.93 547.14" y="0" font-size="10.5">16</text></g><g fill="#b8b8b8" text-anchor="middle"><text transform="translate(0 536) scale(0.78 1)" x="570.8 577.01" y="0" font-size="10.5">17</text></g><g fill="#b8b8b8" text-anchor="middle"><text transform="translate(0 536) scale(0.78 1)" x="624.26 630.47" y="0" font-size="10.5">18</text></g><g fill="#b8b8b8" text-anchor="middle"><text transform="translate(0 536) scale(0.78 1)" x="678.88 685.09" y="0" font-size="10.5">19</text></g><g fill="#b8b8b8" text-anchor="middle"><text transform="translate(0 536) scale(0.78 1)" x="720.16 726.37" y="0" font-size="10.5">20</text></g><g fill="#b8b8b8" text-anchor="middle"><text transform="translate(0 536) scale(0.78 1)" x="770.54 776.75" y="0" font-size="10.5">21</text></g><g fill="#b8b8b8" text-anchor="middle"><text transform="translate(0 536) scale(0.78 1)" x="826.7 832.91" y="0" font-size="10.5">22</text></g><g fill="#b8b8b8" text-anchor="middle"><text transform="translate(0 536) scale(0.78 1)" x="889.39 895.6" y="0" font-size="10.5">23</text></g><g fill="#b8b8b8" text-anchor="middle"><text transform="translate(0 536) scale(0.78 1)" x="951.05 957.27" y="0" font-size="10.5">00</text></g><g fill="#b8b8b8" text-anchor="middle"><text transform="translate(0 536) scale(0.78 1)" x="1013.36 1019.57" y="0" font-size="10.5">01</text></g><g fill="#b8b8b8" text-anchor="middle"><text transform="translate(0 536) scale(0.78 1)" x="1070.54 1076.75" y="0" font-size="10.5">02</text></g><g fill="#b8b8b8" text-anchor="middle"><text transform="translate(0 536) scale(0.78 1)" x="1121.05 1127.27" y="0" font-size="10.5">03</text></g><g fill="#b8b8b8" text-anchor="middle"><text transform="translate(0 536) scale(0.78 1)" x="1170.41 1176.62" y="0" font-size="10.5">04</text></g><g fill="#b8b8b8" text-anchor="middle"><text transform="translate(0 536) scale(0.78 1)" x="1221.05 1227.27" y="0" font-size="10.5">05</text></g><g fill="#b8b8b8" text-anchor="middle"><text transform="translate(0 536) scale(0.78 1)" x="1230.94 1237.15" y="0" font-size="10.5">06</text></g>
<g fill="#acacac" text-anchor="middle"><text transform="translate(0 377.3) scale(0.78 1)" x="1249.9 1256.11 1262.32 1268.54 1274.75" y="0" font-size="10.5">3,525</text></g>
<g fill="#acacac" text-anchor="middle"><text transform="translate(0 425.9) scale(0.78 1)" x="1249.9 1256.11 1262.32 1268.54 1274.75" y="0" font-size="10.5">3,500</text></g>
<g fill="#acacac" text-anchor="middle"><text transform="translate(0 473.8) scale(0.78 1)" x="1249.9 1256.11 1262.32 1268.54 1274.75" y="0" font-size="10.5">3,475</text></g>
<g fill="#acacac" text-anchor="middle"><text transform="translate(0 522.6) scale(0.78 1)" x="1249.9 1256.11 1262.32 1268.54 1274.75" y="0" font-size="10.5">3,450</text></g>
<rect x="971.9" y="512" width="46.5" height="16.6" fill="#d3d3d3"/>
<g fill="#000" text-anchor="middle" font-weight="bold"><text transform="translate(0 523.3) scale(0.78 1)" x="1262.59 1268.8 1275.02 1281.23 1287.44" y="0" font-size="10.5">3,452</text></g>
</g>
<rect x="4.7" y="198.9" width="1013.7" height="1.1" fill="#9a9a9a"/>
<rect x="4.7" y="202.45" width="967.5" height="2.0" fill="#b8b8b8"/>
<rect x="972.2" y="202.45" width="46.2" height="0.7" fill="#8a8a8a"/>
<rect x="4.7" y="199.85" width="1013.7" height="2.75" fill="#fcfcfc"/>
<rect x="4.7" y="370.65" width="1013.7" height="1.1" fill="#9a9a9a"/>
<rect x="4.7" y="374.2" width="967.5" height="2.0" fill="#b8b8b8"/>
<rect x="972.2" y="374.2" width="46.2" height="0.7" fill="#8a8a8a"/>
<rect x="4.7" y="371.6" width="1013.7" height="2.75" fill="#fcfcfc"/>
<rect x="4.7" y="37.7" width="966.8" height="1.2" fill="#f0f0f0"/>
</g>
</svg>
</body>
</html>
